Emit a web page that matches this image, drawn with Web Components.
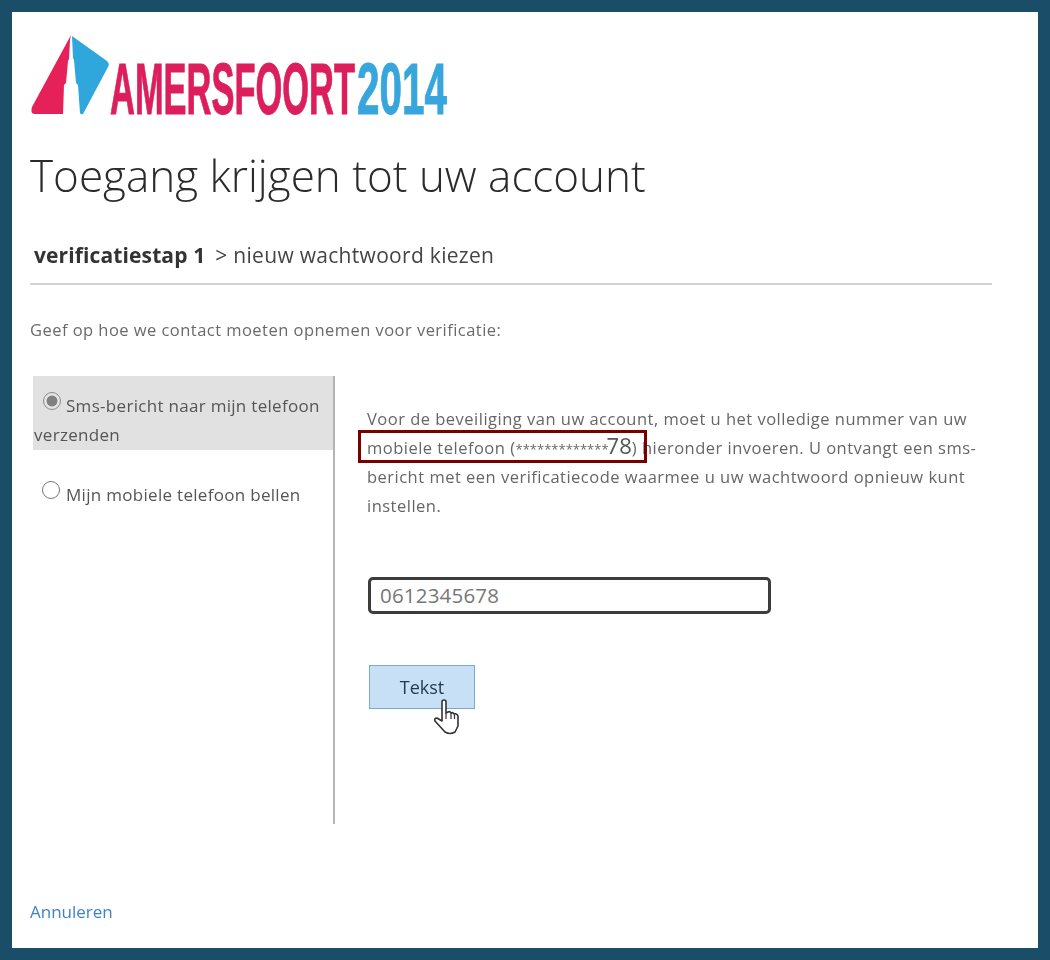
<!DOCTYPE html>
<html lang="nl"><head><meta charset="utf-8"><title>Toegang</title>
<style>
html,body{margin:0;padding:0;background:#1a4d68}
body{width:1050px;height:960px;overflow:hidden;font-family:"Open Sans","Noto Sans",sans-serif}
</style></head><body>
<reset-frame>
  <brand-logo></brand-logo>
  <page-heading>Toegang krijgen tot uw account</page-heading>
  <step-bar><b slot="current">verificatiestap 1</b><span slot="next">&gt; nieuw wachtwoord kiezen</span></step-bar>
  <p-prompt>Geef op hoe we contact moeten opnemen voor verificatie:</p-prompt>
  <split-pane>
    <radio-option slot="side" selected>Sms-bericht naar mijn telefoon verzenden</radio-option>
    <radio-option slot="side">Mijn mobiele telefoon bellen</radio-option>
    <verify-panel slot="main"></verify-panel>
  </split-pane>
  <cancel-link>Annuleren</cancel-link>
</reset-frame>
<script>
function def(name, css, html){
  customElements.define(name, class extends HTMLElement{
    constructor(){super();const r=this.attachShadow({mode:'open'});r.innerHTML='<style>'+css+'</style>'+html;}
  });
}
def('reset-frame',`:host{display:flex;flex-direction:column;box-sizing:border-box;width:1026px;height:936px;margin:12px;background:#fff;padding:23px 46px 0 18px}`,`<slot></slot>`);

def('brand-logo',`:host{display:block;height:82px}svg{display:block;overflow:visible;filter:blur(.6px)}
text{font-family:"Liberation Sans",sans-serif;font-weight:700;font-size:72px;stroke-width:1}`,
`<svg width="418" height="82" viewBox="0 0 418 82">
<path d="M41 0 L2 72 Q0 79 5 79 L33 79 L34 50 L36 48 L38 26 L39 24 L40 5Z" fill="#e62059"/>
<path d="M42 1 L77 26 Q80 29 78 32 L53 79 Q51 80 50 78 L48 50 L46 48 L44 25 L43 23Z" fill="#2fa6dc"/>
<text x="80" y="79" textLength="245" lengthAdjust="spacingAndGlyphs" fill="#dc1f5c" stroke="#dc1f5c">AMERSFOORT</text>
<text x="327" y="79" textLength="90" lengthAdjust="spacingAndGlyphs" fill="#37a6dc" stroke="#37a6dc">2014</text>
</svg>`);

def('page-heading',`:host{display:block;margin-top:28px;font:300 44px/60px "Open Sans",sans-serif;color:#2b2b2b;white-space:nowrap;filter:blur(.35px)}`,`<slot></slot>`);

def('step-bar',`:host{display:flex;gap:10px;align-items:center;margin-top:32px;height:48px;box-sizing:border-box;padding:0 0 10px 4px;border-bottom:2px solid #d2d2d2;width:962px;font:400 21px/28px "Open Sans",sans-serif;letter-spacing:.3px;color:#444;filter:blur(.35px);white-space:nowrap}
::slotted(b){font-weight:700;color:#333;letter-spacing:.12px}`,`<slot name="current"></slot><slot name="next"></slot>`);

def('p-prompt',`:host{display:block;margin-top:35px;font:400 16.5px/20px "Open Sans",sans-serif;letter-spacing:.46px;color:#6a6a6a;filter:blur(.35px);white-space:nowrap}`,`<slot></slot>`);

def('split-pane',`:host{display:flex;margin-top:36px;height:448px}
.side{width:300px;margin-left:3px;border-right:2px solid #b4b4b4;flex:none}
.main{flex:1;min-width:0;padding:28px 0 0 32px}`,
`<div class="side"><slot name="side"></slot></div><div class="main"><slot name="main"></slot></div>`);

def('radio-option',`:host{display:block;box-sizing:border-box;font:400 17px/29px "Open Sans",sans-serif;letter-spacing:.3px;color:#555;filter:blur(.3px)}
:host([selected]){background:#e1e1e1;height:74px;padding:15px 0 0 1px;margin-bottom:16px}
:host(:not([selected])){padding:14px 0 0 9px}
.dot{display:inline-block;width:18px;height:18px;box-sizing:border-box;border:1.5px solid #777;border-radius:50%;background:#fff;vertical-align:-1px;margin-right:6px;position:relative;top:-3px}
:host([selected]) .dot{margin-left:9px;margin-right:5px;border-color:#8c8c8c;background:radial-gradient(circle,#808080 0 5px,#e4e4e4 5.8px)}
`,`<span class="dot"></span><slot></slot>`);

def('verify-panel',`:host{display:block;position:relative}
p{margin:0;width:615px;font:400 16.5px/29px "Open Sans",sans-serif;letter-spacing:.49px;color:#666;filter:blur(.35px)}
.a{font-size:13px;line-height:0;letter-spacing:0}
.n{font-size:22px;line-height:0;color:#555;letter-spacing:0;margin-left:-2px}
.mark{position:absolute;left:-9px;top:26px;width:289px;height:33px;box-sizing:border-box;border:3px solid #7a0000}
.inp{display:flex;align-items:center;box-sizing:border-box;width:403px;height:37px;margin:57px 0 0 1px;padding:0 9px;border:3px solid #3c3c3c;border-radius:5px;font:400 20.500px/1 "Open Sans",sans-serif;color:#777;background:#fff;letter-spacing:.2px}
.btn-wrap{position:relative;width:106px;margin:51px 0 0 2px}
.btn{display:flex;align-items:center;justify-content:center;box-sizing:border-box;width:106px;height:44px;background:#c7e0f6;border:1.5px solid #7ba9d4;font:400 18px/1 "Open Sans",sans-serif;color:#1e3a4c;filter:blur(.3px)}
svg{position:absolute;left:64px;top:34px}`,
`<p>Voor de beveiliging van uw account, moet u het volledige nummer van uw mobiele telefoon (<span class="a">*************</span><span class="n">78</span>) hieronder invoeren. U ontvangt een sms-bericht met een verificatiecode waarmee u uw wachtwoord opnieuw kunt instellen.</p>
<div class="mark"></div>
<div class="inp">0612345678</div>
<div class="btn-wrap"><div class="btn">Tekst</div>
<svg width="28" height="36" viewBox="0 0 28 36"><path d="M9 3 Q9 1 11 1 Q13 1 13 3 V14 L15 13 Q17 12 18 14 Q20 13 21 15 Q24 14 25 17 V27 L22 33 Q17 36 12 33 L2 22 Q1 19 4 19 L9 22Z" fill="#fff" stroke="#333" stroke-width="1.6" stroke-linejoin="round"/><path d="M13 14V20M18 14V20M21.500 15V20" stroke="#333" stroke-width="1.200" fill="none"/></svg></div>`);

def('cancel-link',`:host{display:block;margin-top:77px;font:400 17px/22px "Open Sans",sans-serif;color:#3f83c6;filter:blur(.35px)}`,`<slot></slot>`);
</script>
</body></html>
